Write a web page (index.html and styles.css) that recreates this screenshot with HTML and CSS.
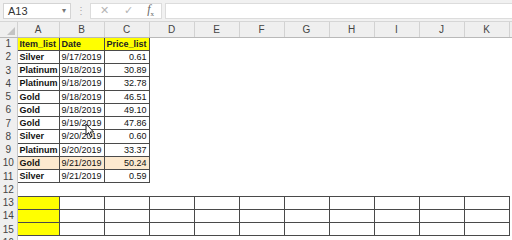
FILE: index.html
```html
<!DOCTYPE html>
<html lang="en">
<head>
  <meta charset="UTF-8">
  <title>Book1 - Excel</title>
  <link rel="stylesheet" href="styles.css">
</head>
<body>
  <div class="excel">
    <div class="formula-bar">
      <div class="name-box"><span>A13</span><span class="caret">&#9662;</span></div>
      <div class="grip">&#8942;</div>
      <div class="fx-box">
        <span class="fx-btn">&#10005;</span>
        <span class="fx-btn">&#10003;</span>
        <span class="fx-btn fx"><i>f</i><sub>x</sub></span>
      </div>
      <div class="formula-input"></div>
    </div>

    <table class="sheet">
      <colgroup>
        <col class="w-rh"><col class="w-a"><col class="w-n" span="10"><col>
      </colgroup>
      <thead>
        <tr>
          <th class="corner"><span class="tri"></span></th>
          <th>A</th><th>B</th><th>C</th><th>D</th><th>E</th><th>F</th>
          <th>G</th><th>H</th><th>I</th><th>J</th><th>K</th><th class="edge"></th>
        </tr>
      </thead>
      <tbody>
        <tr class="hdr">
          <th>1</th><td class="d b">Item_list</td><td class="d b">Date</td><td class="d b">Price_list</td><td colspan="9"></td>
        </tr>
        <tr><th>2</th><td class="d b">Silver</td><td class="d">9/17/2019</td><td class="d r">0.61</td><td colspan="9"></td></tr>
        <tr><th>3</th><td class="d b">Platinum</td><td class="d">9/18/2019</td><td class="d r">30.89</td><td colspan="9"></td></tr>
        <tr><th>4</th><td class="d b">Platinum</td><td class="d">9/18/2019</td><td class="d r">32.78</td><td colspan="9"></td></tr>
        <tr><th>5</th><td class="d b">Gold</td><td class="d">9/18/2019</td><td class="d r">46.51</td><td colspan="9"></td></tr>
        <tr><th>6</th><td class="d b">Gold</td><td class="d">9/18/2019</td><td class="d r">49.10</td><td colspan="9"></td></tr>
        <tr><th>7</th><td class="d b">Gold</td><td class="d">9/19/2019</td><td class="d r">47.86</td><td colspan="9"></td></tr>
        <tr><th>8</th><td class="d b">Silver</td><td class="d">9/20/2019</td><td class="d r">0.60</td><td colspan="9"></td></tr>
        <tr><th>9</th><td class="d b">Platinum</td><td class="d">9/20/2019</td><td class="d r">33.37</td><td colspan="9"></td></tr>
        <tr class="hl"><th>10</th><td class="d b">Gold</td><td class="d">9/21/2019</td><td class="d r">50.24</td><td colspan="9"></td></tr>
        <tr><th>11</th><td class="d b">Silver</td><td class="d">9/21/2019</td><td class="d r">0.59</td><td colspan="9"></td></tr>
        <tr><th>12</th><td colspan="12"></td></tr>
        <tr class="crit"><th>13</th><td class="y"></td><td></td><td></td><td></td><td></td><td></td><td></td><td></td><td></td><td></td><td></td><td class="edge"></td></tr>
        <tr class="crit"><th>14</th><td class="y"></td><td></td><td></td><td></td><td></td><td></td><td></td><td></td><td></td><td></td><td></td><td class="edge"></td></tr>
        <tr class="crit"><th>15</th><td class="y"></td><td></td><td></td><td></td><td></td><td></td><td></td><td></td><td></td><td></td><td></td><td class="edge"></td></tr>
        <tr><th>16</th><td colspan="12"></td></tr>
      </tbody>
    </table>

    <svg class="cursor" width="10" height="16" viewBox="0 0 10 16">
      <path d="M1 1 L1 12 L3.6 9.6 L5.6 14 L7.2 13.3 L5.3 9 L8.6 9 Z" fill="#fff" stroke="#222" stroke-width="1"/>
    </svg>
  </div>
</body>
</html>
```

FILE: styles.css
```css
* {
  box-sizing: border-box;
}

body {
  margin: 0;
  background: #fff;
  font-family: "Liberation Sans", Arial, sans-serif;
  font-size: 9px;
  color: #111;
}

.excel {
  position: relative;
  width: 512px;
  height: 240px;
  overflow: hidden;
}

/* formula bar */
.formula-bar {
  display: flex;
  align-items: center;
  height: 22px;
  padding: 2px 0 2px 3px;
  background: #f1f1f1;
  border-bottom: 1px solid #d6d6d6;
}

.name-box {
  display: flex;
  align-items: center;
  justify-content: space-between;
  width: 68px;
  height: 16px;
  padding: 0 4px 0 4px;
  background: #fff;
  border: 1px solid #d4d4d4;
  font-size: 11px;
  color: #333;
}

.caret {
  font-size: 8px;
  color: #777;
}

.grip {
  width: 19px;
  text-align: center;
  color: #a8a8a8;
  font-size: 10px;
}

.fx-box {
  display: flex;
  align-items: center;
  justify-content: space-between;
  width: 72px;
  height: 16px;
  padding: 0 7px 0 9px;
  background: #fff;
  border: 1px solid #dcdcdc;
}

.fx-btn {
  color: #b5b5b5;
  font-size: 11px;
}

.fx-btn.fx {
  color: #666;
  font-family: "Liberation Serif", serif;
  font-size: 12px;
}

.fx sub {
  font-size: 7px;
}

.formula-input {
  flex: 1;
  height: 16px;
  margin-left: 3px;
  background: #fff;
  border: 1px solid #dcdcdc;
  border-right: none;
}

/* grid */
.sheet {
  width: 512px;
  table-layout: fixed;
  border-collapse: collapse;
}

.w-rh { width: 17px; }
.w-a { width: 42px; }
.w-n { width: 45px; }

.sheet thead th {
  height: 15px;
  background: #efefef;
  border-right: 1px solid #d2d2d2;
  border-bottom: 1px solid #b9b9b9;
  font-weight: normal;
  font-size: 10px;
  color: #444;
  padding: 0;
}

.sheet thead th.edge {
  border-right: none;
}

.corner {
  position: relative;
}

.tri {
  position: absolute;
  right: 2px;
  bottom: 2px;
  width: 0;
  height: 0;
  border-left: 8px solid transparent;
  border-bottom: 8px solid #c3c3c3;
}

.sheet tbody tr {
  height: 13.25px;
}

.sheet tbody th {
  background: #efefef;
  border-right: 1px solid #c8c8c8;
  font-weight: normal;
  font-size: 10px;
  color: #444;
  text-align: center;
  padding: 0;
}

.sheet td {
  padding: 0 2px;
  white-space: nowrap;
  overflow: hidden;
  line-height: 12px;
}

.sheet td.d {
  border: 1px solid #4a4a4a;
}

.sheet td.b {
  font-weight: bold;
}

.sheet td.r {
  text-align: right;
}

.hdr td.d {
  background: #ffff00;
  color: #222;
}

.hl td.d {
  background: #fce9cf;
}

.crit td {
  border: 1px solid #4a4a4a;
}

.crit td.y {
  background: #ffff00;
}

.crit td.edge {
  border: none;
  border-left: 1px solid #4a4a4a;
}

.cursor {
  position: absolute;
  left: 85px;
  top: 123px;
}
```
